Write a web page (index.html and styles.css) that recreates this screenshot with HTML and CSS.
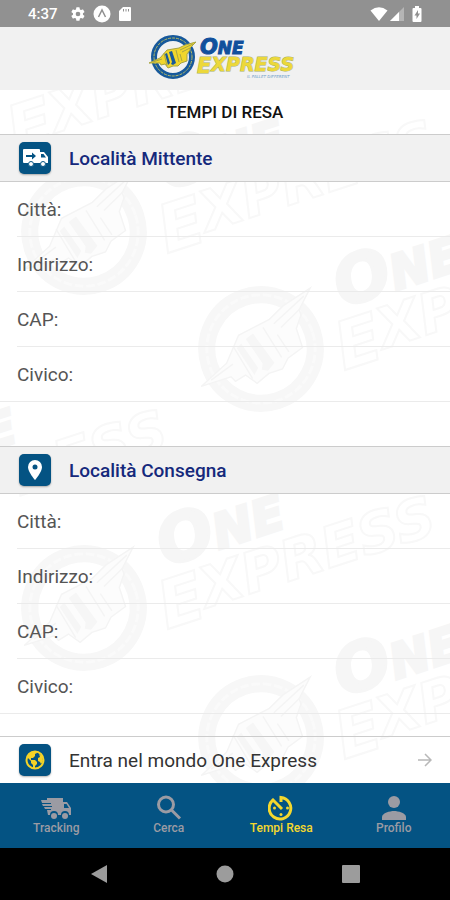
FILE: index.html
```html
<!DOCTYPE html>
<html lang="it">
<head>
  <meta charset="UTF-8">
  <title>Tempi di Resa - One Express</title>
  <meta name="viewport" content="width=device-width, initial-scale=1">
  <link rel="stylesheet" href="styles.css">
</head>
<body>

  <!-- shared shapes -->
  <svg class="defs" width="0" height="0" aria-hidden="true">
    <symbol id="emblem" viewBox="-27 -27 54 54">
      <circle class="ring" r="19"/>
      <circle class="ring-line" r="19"/>
      <path class="wing" d="M23-15 12-12 6-9-6-7-13 1-24 6-13 6-12 8-8 7-5 11 0 9 5 9 8 6 14 4 14-3 17-7 17-9Z"/>
      <path class="wing-core" d="M-4-5-1-6 3 6 0 8-2 7-1 5ZM-8-3-6-4-3 6-5 8Z"/>
      <path class="wing-line" d="M20-13 7-7M17-9 9-5M3-7 6 5M7-3 9 4M-20 5-11 2M-9-4-6 9"/>
    </symbol>
    <symbol id="stamp" viewBox="-80 -160 480 260" overflow="visible">
      <g transform="rotate(-18)">
        <use href="#emblem" x="-77" y="-77" width="154" height="154"/>
        <text class="mark-fill" x="90" y="-14"><tspan class="mark-lg">O</tspan><tspan class="mark-sm">NE</tspan></text>
        <text class="mark-line" x="72" y="46"><tspan class="mark-lg">E</tspan><tspan class="mark-md" dy="-8">XPRESS</tspan></text>
      </g>
    </symbol>
  </svg>

  <div class="status-bar">
    <span class="time">4:37</span>
    <svg width="16" height="16" viewBox="0 0 24 24"><path fill="#fff" d="M19.4 13a7.500 7.500 0 0 0 0-2l2.100-1.600a.5.5 0 0 0 .1-.6l-2-3.500a.5.5 0 0 0-.6-.2l-2.500 1a7.300 7.300 0 0 0-1.700-1l-.4-2.600a.5.500 0 0 0-.5-.5h-4a.5.500 0 0 0-.5.5L9 5.100a7.300 7.300 0 0 0-1.700 1l-2.500-1a.5.500 0 0 0-.6.2l-2 3.500a.5.500 0 0 0 .1.6L4.500 11a7.500 7.500 0 0 0 0 2l-2.200 1.600a.5.500 0 0 0-.1.6l2 3.500c.1.2.4.3.6.2l2.500-1a7.300 7.300 0 0 0 1.700 1l.4 2.600c0 .3.200.5.5.5h4c.3 0 .5-.2.500-.5l.4-2.600a7.300 7.300 0 0 0 1.700-1l2.500 1c.2.1.5 0 .6-.2l2-3.500a.5.500 0 0 0-.1-.6zM12 15.500a3.500 3.500 0 1 1 0-7 3.500 3.500 0 0 1 0 7z"/></svg>
    <svg width="18" height="18" viewBox="0 0 18 18"><circle cx="9" cy="9" r="8.500" fill="#fff"/><path d="M5.500 12 9 5l3.500 7" fill="none" stroke="#919191" stroke-width="1.500"/></svg>
    <svg width="14" height="16" viewBox="0 0 14 16"><path fill="#fff" d="M5 1h7a1 1 0 0 1 1 1v12a1 1 0 0 1-1 1H2a1 1 0 0 1-1-1V5z"/><path stroke="#919191" d="M5.500 3v2.500M8 3v2.500M10.500 3v2.500"/></svg>
    <span class="status-right">
      <svg width="18" height="16" viewBox="0 0 18 16"><path fill="#fff" d="M9 15 .5 4.500Q9-2 17.500 4.500z"/></svg>
      <svg width="14" height="14" viewBox="0 0 14 14"><path fill="#b5b5b5" d="M14 0v14H0z"/><path fill="#fff" d="M9 5v9H0z"/></svg>
      <svg class="battery" width="10" height="16" viewBox="0 0 10 16"><path fill="#fff" d="M3 0h4v2h1.500a1 1 0 0 1 1 1v12a1 1 0 0 1-1 1h-7a1 1 0 0 1-1-1V3a1 1 0 0 1 1-1H3z"/><path fill="#919191" d="M6 4 2.500 9.500h2V13L8 7.500H6z"/></svg>
    </span>
  </div>

  <header class="header">
    <svg class="logo" width="158" height="54" viewBox="0 0 158 54" role="img" aria-label="One Express">
      <use href="#emblem" x="0" y="0" width="54" height="54"/>
      <text class="logo-one" x="54" y="24"><tspan class="logo-lg">O</tspan><tspan class="logo-sm">NE</tspan></text>
      <text class="logo-express" x="51" y="43"><tspan class="logo-lg">E</tspan><tspan class="logo-md" dy="-2">XPRESS</tspan></text>
      <text class="logo-tag" x="101" y="48">IL PALLET DIFFERENT</text>
    </svg>
  </header>

  <main class="content">
    <svg class="watermark" aria-hidden="true">
      <use href="#stamp" x="-147" y="-117" width="480" height="260"/>
      <use href="#stamp" x="4" y="-18" width="480" height="260"/>
      <use href="#stamp" x="181" y="99" width="480" height="260"/>
      <use href="#stamp" x="-264" y="272" width="480" height="260"/>
      <use href="#stamp" x="4" y="358" width="480" height="260"/>
      <use href="#stamp" x="181" y="488" width="480" height="260"/>
    </svg>

    <h1 class="title">TEMPI DI RESA</h1>

    <form class="form">
      <section class="group">
        <h2 class="group-title">
          <span class="badge">
            <svg width="28" height="20" viewBox="0 0 28 20"><path fill="#fff" d="M3 1h15a1 1 0 0 1 1 1v2h4l4 5v6h-2a3 3 0 0 1-6 0h-6a3 3 0 0 1-6 0H3a1 1 0 0 1-1-1V2a1 1 0 0 1 1-1z"/><path fill="#045383" d="M20 6h2.500l2.500 3.500h-5zM5 7h6V4.500l4 3.500-4 3.500V9H5z"/><circle cx="10" cy="16" r="2.500" fill="#fff" stroke="#045383"/><circle cx="22" cy="16" r="2.500" fill="#fff" stroke="#045383"/></svg>
          </span>
          Località Mittente
        </h2>
        <div class="row"><label for="mittCitta">Città:</label><input type="text" id="mittCitta"></div>
        <div class="row"><label for="mittIndirizzo">Indirizzo:</label><input type="text" id="mittIndirizzo"></div>
        <div class="row"><label for="mittCap">CAP:</label><input type="text" id="mittCap"></div>
        <div class="row"><label for="mittCivico">Civico:</label><input type="text" id="mittCivico"></div>
      </section>

      <section class="group">
        <h2 class="group-title">
          <span class="badge">
            <svg width="16" height="20" viewBox="0 0 16 20"><path fill="#fff" d="M8 0a7 7 0 0 0-7 7c0 5 7 13 7 13s7-8 7-13a7 7 0 0 0-7-7z"/><circle cx="8" cy="7" r="2.500" fill="#045383"/></svg>
          </span>
          Località Consegna
        </h2>
        <div class="row"><label for="consCitta">Città:</label><input type="text" id="consCitta"></div>
        <div class="row"><label for="consIndirizzo">Indirizzo:</label><input type="text" id="consIndirizzo"></div>
        <div class="row"><label for="consCap">CAP:</label><input type="text" id="consCap"></div>
        <div class="row"><label for="consCivico">Civico:</label><input type="text" id="consCivico"></div>
      </section>
    </form>

    <a class="world-link" href="#mondo">
      <span class="badge">
        <svg width="20" height="20" viewBox="0 0 20 20"><circle cx="10" cy="10" r="8.500" fill="none" stroke="#f5d327" stroke-width="2"/><path fill="#f5d327" d="M2 7 6 2l5-1 1 2-2 1v2L8 8H6v2h4l2 2v2l-2 2v3l-2-1v-3l-2-2v-2zM14 4l3 2 1 5-2 3-1-2-2-1v-3l2-1z"/></svg>
      </span>
      <span class="world-text">Entra nel mondo One Express</span>
      <svg class="arrow" width="14" height="14" viewBox="0 0 14 14"><path fill="none" stroke="#b8b8b8" stroke-width="1.500" d="M0 7h13M7 1l6 6-6 6"/></svg>
    </a>
  </main>

  <nav class="tabs">
    <a class="tab" href="#tracking">
      <svg width="32" height="26" viewBox="0 0 32 26"><path fill="currentColor" d="M7 3h16v4h4l4 6v7h-2a4 4 0 0 0-8 0h-3a4 4 0 0 0-8 0H8l-1-5h4v-1H5l-1-2h8v-1H3L2 9h9V8H2L1 5h6z"/><path fill="#045383" d="M24 9h2.500l2.500 4h-5z"/><circle cx="14" cy="21" r="3" fill="currentColor"/><circle cx="25" cy="21" r="3" fill="currentColor"/></svg>
      Tracking
    </a>
    <a class="tab" href="#cerca">
      <svg width="26" height="26" viewBox="0 0 26 26"><g fill="none" stroke="currentColor" stroke-width="3"><circle cx="10" cy="9.500" r="7.500"/><path d="m15.500 15 8.500 8.500"/></g></svg>
      Cerca
    </a>
    <a class="tab active" href="#tempi">
      <svg width="26" height="26" viewBox="0 0 26 26"><path fill="none" stroke="currentColor" stroke-width="3" d="M13 7V2.500A10.800 10.800 0 1 1 5 5l9 9"/><circle cx="13" cy="19.500" r="1.500" fill="currentColor"/><circle cx="6.500" cy="13" r="1.500" fill="currentColor"/><circle cx="19.500" cy="13" r="1.500" fill="currentColor"/></svg>
      Tempi Resa
    </a>
    <a class="tab" href="#profilo">
      <svg width="26" height="26" viewBox="0 0 26 26"><circle cx="13" cy="7" r="6" fill="currentColor"/><path fill="currentColor" d="M1 25v-3c0-4 8-6 12-6s12 2 12 6v3z"/></svg>
      Profilo
    </a>
  </nav>

  <div class="system-nav">
    <button type="button" aria-label="Indietro"><svg width="18" height="18" viewBox="0 0 18 18"><path fill="#9c9c9c" d="M17 0v18L1 9z"/></svg></button>
    <button type="button" aria-label="Home"><svg width="18" height="18" viewBox="0 0 18 18"><circle cx="9" cy="9" r="8.500" fill="#9c9c9c"/></svg></button>
    <button type="button" aria-label="Recenti"><svg width="18" height="18" viewBox="0 0 18 18"><rect width="18" height="18" rx="1" fill="#9c9c9c"/></svg></button>
  </div>

</body>
</html>
```
FILE: styles.css
```css
* {
  box-sizing: border-box;
}
body {
  margin: 0;
  min-height: 100vh;
  display: flex;
  flex-direction: column;
  font-family: Roboto, "Liberation Sans", sans-serif;
  background: #fff;
  color: #111;
}
svg {
  display: block;
  flex-shrink: 0;
}
.defs {
  display: none;
}

/* status bar */
.status-bar {
  display: flex;
  align-items: center;
  gap: 7px;
  height: 27px;
  padding: 0 28px;
  background: #919191;
  color: #fff;
}
.time {
  margin-right: 5px;
  font-size: 15px;
  font-weight: 500;
}
.status-right {
  display: flex;
  align-items: center;
  gap: 2px;
  margin-left: auto;
}
.battery {
  margin-left: 6px;
}

/* header and logo */
.header {
  display: flex;
  justify-content: center;
  align-items: center;
  height: 63px;
  padding-bottom: 3px;
  background: #f1f1f1;
}
.ring {
  fill: none;
  stroke: var(--ring, #17599b);
  stroke-width: 6px;
}
.ring-line {
  fill: none;
  stroke: var(--ring-line, #b9bd62);
  stroke-width: 1px;
  stroke-dasharray: 3 1;
}
.wing {
  fill: var(--wing, #f0d62c);
  stroke: var(--wing-line, #a8a545);
  stroke-width: var(--wing-stroke, 1px);
}
.wing-core {
  fill: var(--core, #17599b);
}
.wing-line {
  fill: none;
  stroke: var(--wing-line, #a8a545);
  stroke-width: var(--wing-stroke, 1px);
}
.logo text {
  font-family: "DejaVu Sans", sans-serif;
  font-weight: bold;
  font-style: italic;
}
.logo-one {
  fill: #11509c;
  stroke: #11509c;
}
.logo-express {
  fill: #ecd83a;
  stroke: #a9b267;
  stroke-width: 1px;
  paint-order: stroke;
}
.logo-lg {
  font-size: 21px;
}
.logo-md {
  font-size: 19px;
}
.logo-sm {
  font-size: 17px;
}
.logo .logo-tag {
  font-size: 4px;
  font-weight: normal;
  fill: #6fa0c8;
}

/* content */
.content {
  position: relative;
  flex: 1;
  display: flex;
  flex-direction: column;
  overflow: hidden;
}
.watermark {
  position: absolute;
  top: 0;
  left: 0;
  width: 100%;
  height: 100%;
  z-index: -1;
  --ring: #f7f7f7;
  --ring-line: #fafafa;
  --wing: #fcfcfc;
  --wing-line: #f4f4f4;
  --wing-stroke: 0.5px;
  --core: #f6f6f6;
  font-family: "DejaVu Sans", sans-serif;
  font-weight: bold;
  font-style: italic;
}
.mark-fill {
  fill: #f6f6f6;
  stroke: #f6f6f6;
  stroke-width: 3px;
}
.mark-line {
  fill: none;
  stroke: #f8f8f8;
  stroke-width: 2px;
}
.mark-lg {
  font-size: 66px;
}
.mark-md {
  font-size: 56px;
}
.mark-sm {
  font-size: 48px;
}
.title {
  margin: 0;
  font-size: 17px;
  font-weight: 500;
  line-height: 44px;
  text-align: center;
}
.form {
  flex: 1;
}
.group {
  margin-bottom: 44px;
}
.group:last-child {
  margin-bottom: 0;
}
.group-title {
  display: flex;
  align-items: center;
  gap: 18px;
  height: 48px;
  margin: 0;
  padding: 0 19px;
  background: #f1f1f1;
  border-top: 1px solid #ccc;
  border-bottom: 1px solid #ccc;
  color: #15297c;
  font-size: 19px;
  font-weight: 500;
}
.badge {
  display: flex;
  align-items: center;
  justify-content: center;
  width: 32px;
  height: 32px;
  border-radius: 5px;
  background: #045383;
  box-shadow: 0 1px 2px rgba(0,0,0,0.3);
}
.row {
  display: flex;
  align-items: center;
  height: 55px;
  margin-left: 17px;
  border-bottom: 1px solid #ebebeb;
  color: #555;
  font-size: 19px;
}
.row:last-child {
  margin-left: 0;
  padding-left: 17px;
}
.row input {
  flex: 1;
  min-width: 0;
  margin: 0 17px 0 10px;
  padding: 0;
  border: none;
  outline: none;
  background: transparent;
  font: inherit;
}
.world-link {
  display: flex;
  align-items: center;
  gap: 18px;
  height: 47px;
  padding: 0 18px 0 19px;
  border-top: 1px solid #ccc;
  color: #333;
  font-size: 19px;
  text-decoration: none;
}
.world-text {
  flex: 1;
}

/* bottom tabs */
.tabs {
  display: grid;
  grid-template-columns: repeat(4, 1fr);
  height: 65px;
  background: #045383;
}
.tab {
  display: flex;
  flex-direction: column;
  align-items: center;
  padding-top: 12px;
  color: #9b9ba3;
  font-size: 12px;
  font-weight: 500;
  line-height: 14px;
  text-decoration: none;
}
.tab.active {
  color: #f5d82e;
}

/* android buttons */
.system-nav {
  display: flex;
  justify-content: space-between;
  align-items: center;
  height: 52px;
  padding: 0 20%;
  background: #000;
}
.system-nav button {
  padding: 0;
  border: none;
  background: none;
}
```
